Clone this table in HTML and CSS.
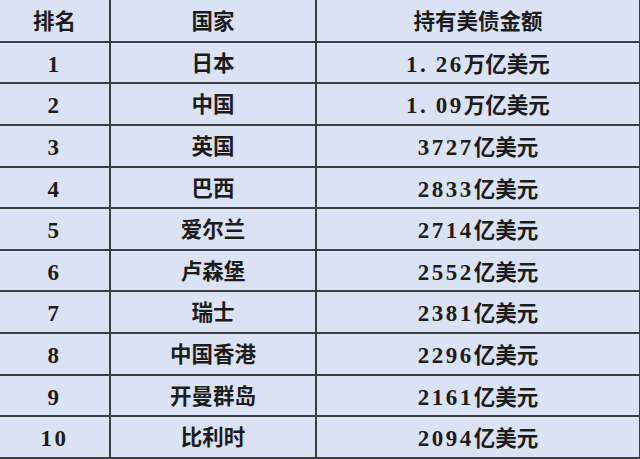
FILE: index.html
```html
<!DOCTYPE html>
<html lang="zh">
<head>
<meta charset="utf-8">
<link rel="stylesheet" href="styles.css">
</head>
<body>
<table class="rank">
  <colgroup><col class="c1"><col class="c2"><col class="c3"></colgroup>
  <tr><th>排名</th><th>国家</th><th>持有美债金额</th></tr>
  <tr><td><span class="num">1</span></td><td>日本</td><td><span class="num">1<span class="dot">.</span>26</span>万亿美元</td></tr>
  <tr><td><span class="num">2</span></td><td>中国</td><td><span class="num">1<span class="dot">.</span>09</span>万亿美元</td></tr>
  <tr><td><span class="num">3</span></td><td>英国</td><td><span class="num">3727</span>亿美元</td></tr>
  <tr><td><span class="num">4</span></td><td>巴西</td><td><span class="num">2833</span>亿美元</td></tr>
  <tr><td><span class="num">5</span></td><td>爱尔兰</td><td><span class="num">2714</span>亿美元</td></tr>
  <tr><td><span class="num">6</span></td><td>卢森堡</td><td><span class="num">2552</span>亿美元</td></tr>
  <tr><td><span class="num">7</span></td><td>瑞士</td><td><span class="num">2381</span>亿美元</td></tr>
  <tr><td><span class="num">8</span></td><td>中国香港</td><td><span class="num">2296</span>亿美元</td></tr>
  <tr><td><span class="num">9</span></td><td>开曼群岛</td><td><span class="num">2161</span>亿美元</td></tr>
  <tr><td><span class="num">10</span></td><td>比利时</td><td><span class="num">2094</span>亿美元</td></tr>
</table>
</body>
</html>
```
FILE: styles.css
```css
html, body {
  margin: 0;
  padding: 0;
  background: #dbe2f3;
}
.rank {
  width: 640px;
  height: 459px;
  border-collapse: collapse;
  table-layout: fixed;
  font-family: "Liberation Serif", "Noto Sans CJK SC", serif;
  font-weight: bold;
  font-size: 21.5px;
  color: #1c1c1c;
}
.c1 { width: 110px; }
.c2 { width: 206px; }
.c3 { width: 324px; }
.rank th, .rank td {
  border-bottom: 2px solid #3a3d42;
  border-right: 2px solid #3a3d42;
  text-align: center;
  vertical-align: middle;
  padding: 4px 0 0 0;
  height: 35px;
  font-weight: bold;
  line-height: 1;
}
.rank th {
  padding-top: 5px;
}
.num {
  font-size: 23px;
  letter-spacing: 2.5px;
}
.dot {
  letter-spacing: 10px;
}
```
